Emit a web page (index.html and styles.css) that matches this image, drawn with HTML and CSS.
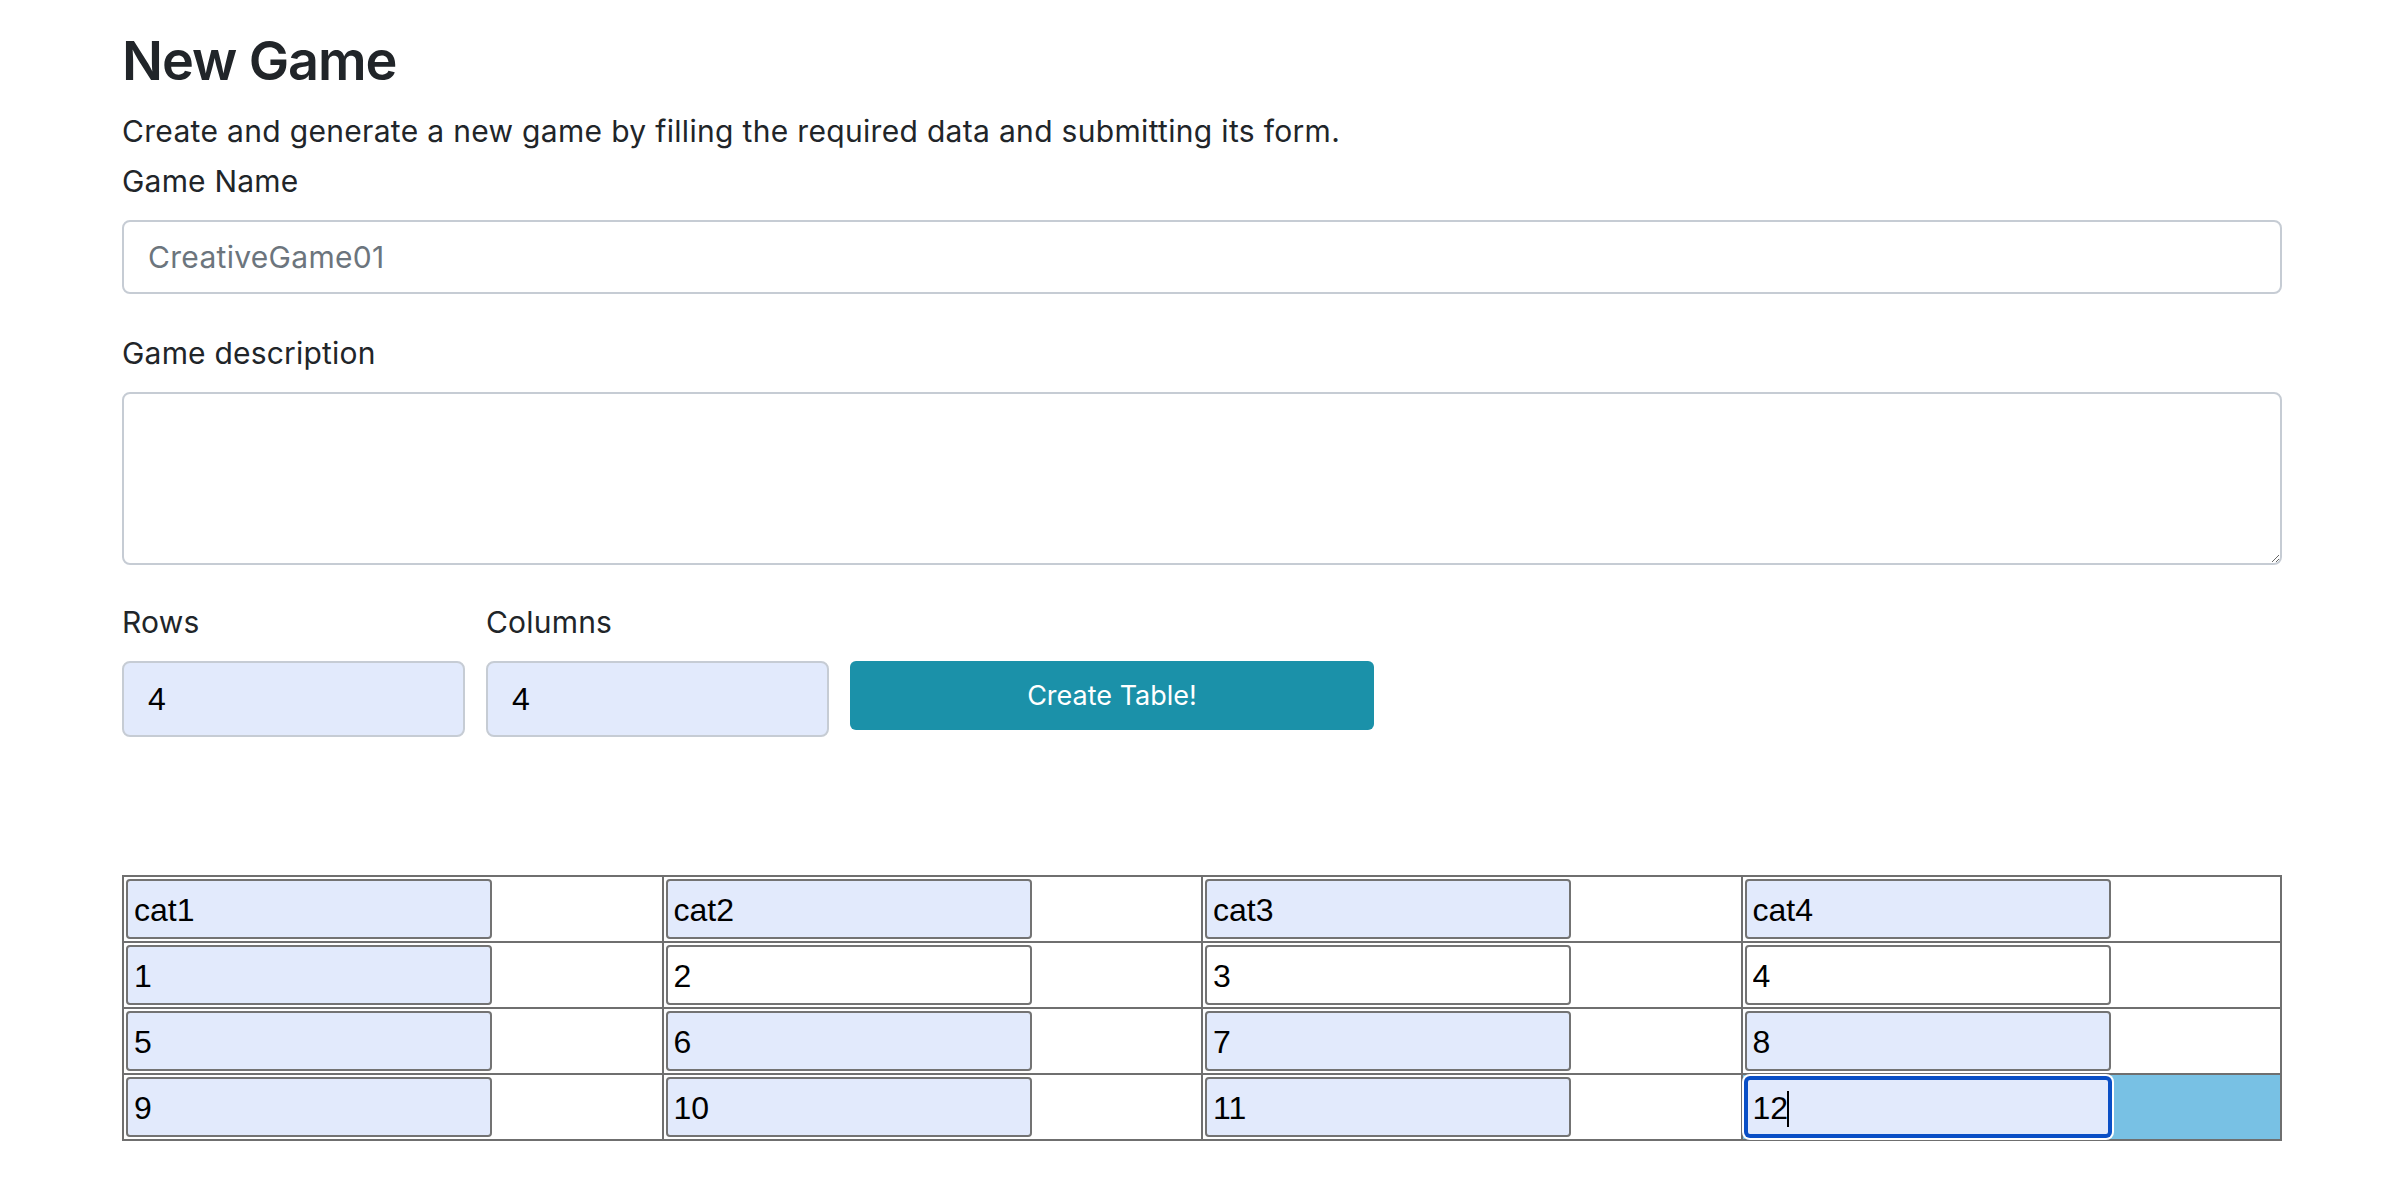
FILE: index.html
```html
<!DOCTYPE html>
<html lang="en">
<head>
<meta charset="utf-8">
<title>New Game</title>
<link rel="stylesheet" href="styles.css">
</head>
<body>
<main class="page">
  <h1 class="title">New Game</h1>
  <p class="lead">Create and generate a new game by filling the required data and submitting its form.</p>
  <form class="form">
    <div class="group">
      <label class="label" for="name">Game Name</label>
      <input class="control" id="name" type="text" placeholder="CreativeGame01">
    </div>
    <div class="group group-desc">
      <label class="label" for="desc">Game description</label>
      <textarea class="control area" id="desc"></textarea>
    </div>
    <div class="size-row">
      <div class="size-field">
        <label class="label" for="rows">Rows</label>
        <input class="control filled" id="rows" type="text" value="4">
      </div>
      <div class="size-field">
        <label class="label" for="cols">Columns</label>
        <input class="control filled" id="cols" type="text" value="4">
      </div>
      <button class="create-btn" type="button">Create Table!</button>
    </div>
  </form>

  <table class="grid">
    <tbody>
      <tr>
        <td><input class="cell filled" value="cat1"></td>
        <td><input class="cell filled" value="cat2"></td>
        <td><input class="cell filled" value="cat3"></td>
        <td><input class="cell filled" value="cat4"></td>
      </tr>
      <tr>
        <td><input class="cell filled" value="1"></td>
        <td><input class="cell" value="2"></td>
        <td><input class="cell" value="3"></td>
        <td><input class="cell" value="4"></td>
      </tr>
      <tr>
        <td><input class="cell filled" value="5"></td>
        <td><input class="cell filled" value="6"></td>
        <td><input class="cell filled" value="7"></td>
        <td><input class="cell filled" value="8"></td>
      </tr>
      <tr>
        <td><input class="cell filled" value="9"></td>
        <td><input class="cell filled" value="10"></td>
        <td><input class="cell filled" value="11"></td>
        <td class="selected">
          <div class="cell-wrap">
            <input class="cell filled focused" value="12">
            <span class="caret"></span>
          </div>
        </td>
      </tr>
    </tbody>
  </table>
</main>
</body>
</html>
```
FILE: styles.css
```css
* { box-sizing: border-box; }

html, body {
  margin: 0;
  padding: 0;
  background: #ffffff;
}

body {
  font-family: Inter, "Noto Sans", "Liberation Sans", sans-serif;
  color: #212529;
}

.page {
  width: 2160px;
  margin-left: 122px;
  padding-top: 29px;
  padding-bottom: 40px;
}

.title {
  margin: 0 0 16px 0;
  font-size: 54px;
  line-height: 64px;
  font-weight: 600;
  letter-spacing: -1.1px;
}

.lead {
  margin: 0 0 5px 0;
  font-size: 30px;
  line-height: 45px;
  letter-spacing: 0.32px;
}

.form {
  display: flex;
  flex-direction: column;
}

.group {
  display: flex;
  flex-direction: column;
  margin-bottom: 37px;
}

.group-desc {
  margin-bottom: 35px;
}

.label {
  display: block;
  font-size: 30px;
  line-height: 45px;
  margin-bottom: 16px;
  letter-spacing: 0.2px;
}

.control {
  display: block;
  width: 100%;
  height: 74px;
  padding: 0 24px;
  font-family: Inter, "Noto Sans", sans-serif;
  font-size: 30px;
  letter-spacing: 0.3px;
  color: #212529;
  background: #ffffff;
  border: 2px solid #c6ccd4;
  border-radius: 8px;
  outline: none;
}

.control::placeholder {
  color: #6c757d;
}

.area {
  height: 173px;
  padding: 12px 24px;
  resize: vertical;
}

.size-row {
  display: flex;
  align-items: flex-start;
  gap: 21px;
}

.size-field {
  width: 343px;
  display: flex;
  flex-direction: column;
}

.size-field .label {
  margin-bottom: 16px;
}

.control.filled {
  height: 76px;
  background: #e2eafc;
  color: #000000;
  font-family: "Liberation Sans", Arial, sans-serif;
  font-size: 32px;
  letter-spacing: 0;
}

.create-btn {
  margin-top: 61px;
  width: 524px;
  height: 69px;
  border: 0;
  border-radius: 6px;
  background: #1b91a9;
  color: #ffffff;
  font-family: Inter, "Noto Sans", sans-serif;
  font-size: 27px;
}

.grid {
  margin-top: 138px;
  width: 2160px;
  border-collapse: collapse;
  table-layout: fixed;
}

.grid td {
  border: 2px solid #6f6f6f;
  padding: 2px 2px;
  vertical-align: middle;
}

.grid td.selected {
  background: #78c1e4;
}

.cell-wrap {
  position: relative;
  width: 366px;
}

.cell {
  display: block;
  width: 366px;
  height: 60px;
  padding: 2px 6px 0 6px;
  font-family: "Liberation Sans", Arial, sans-serif;
  font-size: 32px;
  color: #000000;
  background: #ffffff;
  border: 2px solid #737373;
  border-radius: 4px;
  outline: none;
}

.cell.filled {
  background: #e2eafc;
}

.cell.focused {
  border: 3px solid #0a4fc6;
  border-radius: 5px;
  box-shadow: 0 0 0 1px #0a4fc6, 0 0 0 3px #ffffff;
  padding-left: 5px;
}

.caret {
  position: absolute;
  left: 42px;
  top: 14px;
  width: 2px;
  height: 36px;
  background: #000000;
}
```
